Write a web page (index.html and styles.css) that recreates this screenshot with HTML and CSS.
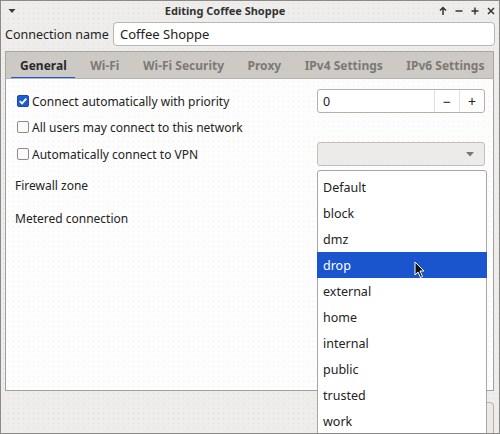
FILE: index.html
```html
<!DOCTYPE html>
<html>
<head>
<meta charset="utf-8">
<link rel="stylesheet" href="styles.css">
</head>
<body>
<div class="window">
  <div class="titlebar">
    <svg class="menu-arrow" width="8" height="6" viewBox="0 0 8 6"><path d="M0.5 1 L7.5 1 L4 5 Z" fill="#3a3a3a"/></svg>
    <div class="title">Editing Coffee Shoppe</div>
    <div class="wbtns">
      <svg width="10" height="10" viewBox="0 0 10 10"><path d="M5 9 V2 M2 4.5 L5 1.5 L8 4.5" stroke="#333" stroke-width="1.5" fill="none"/></svg>
      <svg width="10" height="10" viewBox="0 0 10 10"><path d="M1.5 5 H8.5" stroke="#333" stroke-width="1.5"/></svg>
      <svg width="10" height="10" viewBox="0 0 10 10"><path d="M1.5 5 H8.5 M5 1.5 V8.5" stroke="#333" stroke-width="1.5"/></svg>
      <svg width="10" height="10" viewBox="0 0 10 10"><path d="M2 2 L8 8 M8 2 L2 8" stroke="#333" stroke-width="1.5"/></svg>
    </div>
  </div>
  <div class="namerow">
    <span class="namelabel">Connection name</span>
    <div class="input">Coffee Shoppe</div>
  </div>
  <div class="tabwidget">
    <div class="tabbar">
      <div class="tab active">General</div>
      <div class="tab">Wi-Fi</div>
      <div class="tab">Wi-Fi Security</div>
      <div class="tab">Proxy</div>
      <div class="tab">IPv4 Settings</div>
      <div class="tab">IPv6 Settings</div>
    </div>
    <div class="panel">
      <div class="grid">
        <div class="check"><span class="box checked"><svg width="10" height="10" viewBox="0 0 10 10"><path d="M1.8 5.2 L4 7.4 L8.3 2.6" stroke="#fff" stroke-width="1.8" fill="none"/></svg></span>Connect automatically with priority</div>
        <div class="spin">
          <span class="spinval">0</span>
          <span class="spinbtn">−</span>
          <span class="spinbtn">+</span>
        </div>
        <div class="check"><span class="box"></span>All users may connect to this network</div>
        <div></div>
        <div class="check"><span class="box"></span>Automatically connect to VPN</div>
        <div class="combo disabled"><svg width="8" height="5" viewBox="0 0 8 5"><path d="M0 0 H8 L4 4.5 Z" fill="#7a7876"/></svg></div>
        <div class="label">Firewall zone</div>
        <div></div>
        <div class="label">Metered connection</div>
        <div></div>
      </div>
    </div>
  </div>
  <div class="buttons"><div class="btn"></div></div>

  <div class="popup">
    <div class="item">Default</div>
    <div class="item">block</div>
    <div class="item">dmz</div>
    <div class="item selected">drop</div>
    <div class="item">external</div>
    <div class="item">home</div>
    <div class="item">internal</div>
    <div class="item">public</div>
    <div class="item">trusted</div>
    <div class="item">work</div>
  </div>
  <svg class="cursor" width="12" height="18" viewBox="0 0 12 18"><path d="M1 1 L1 14 L4 11 L6.5 16.5 L8.5 15.5 L6 10 L10 10 Z" fill="#111" stroke="#fff" stroke-width="1" stroke-linejoin="round"/></svg>
</div>
</body>
</html>
```

FILE: styles.css
```css
* { box-sizing: border-box; }
html, body { margin: 0; padding: 0; }
body {
  font-family: "Noto Sans", "Open Sans", sans-serif;
  font-size: 12px;
  color: #232323;
  background: #efedeb;
}
.window {
  position: relative;
  width: 500px;
  height: 434px;
  border: 1px solid #8c8a88;
  background-color: #efedeb;
  background-image: radial-gradient(circle, rgba(0,0,0,0.07) 0.6px, transparent 0.9px);
  background-size: 5px 5px;
  display: flex;
  flex-direction: column;
  overflow: hidden;
}
.titlebar {
  height: 19px;
  display: flex;
  align-items: center;
  flex-shrink: 0;
}
.menu-arrow { margin-left: 7px; margin-right: 4px; }
.title {
  flex: 1;
  text-align: center;
  font-weight: bold;
  font-size: 11px;
  color: #333;
  padding-right: 8px;
}
.wbtns {
  display: flex;
  gap: 6px;
  padding-right: 3px;
}
.namerow {
  display: flex;
  align-items: center;
  padding: 2px 4px 0 4px;
  flex-shrink: 0;
}
.namelabel { font-size: 12.5px; }
.input {
  margin-left: auto;
  width: 382px;
  height: 24px;
  background: #fff;
  border: 1px solid #b9b5b2;
  border-radius: 4px;
  padding-left: 6px;
  display: flex;
  align-items: center;
  font-size: 13px;
}
.tabwidget {
  margin: 5px 5px 0 4px;
  flex-shrink: 0;
}
.tabbar {
  height: 28px;
  background: #cdc9c5;
  border: 1px solid #aaa6a2;
  border-bottom: 1px solid #b7b3af;
  display: flex;
  padding-left: 2px;
  overflow: hidden;
}
.tab {
  position: relative;
  padding: 0 11.5px 0 12px;
  display: flex;
  align-items: center;
  font-weight: bold;
  font-size: 12px;
  color: #7c7975;
  white-space: nowrap;
  flex-shrink: 0;
}
.tab.active { color: #2a2a2a; }
.tab.active::after {
  content: "";
  position: absolute;
  left: 3px;
  right: 3px;
  bottom: -1px;
  height: 2px;
  background: #1d5bd3;
}
.panel {
  height: 312px;
  background-color: #fdfdfd;
  background-image: radial-gradient(circle, rgba(0,0,0,0.06) 0.6px, transparent 0.9px);
  background-size: 5px 5px;
  border: 1px solid #a3a09c;
  border-top: none;
  padding: 10px 8px 0 9px;
}
.grid {
  display: grid;
  grid-template-columns: 1fr 168px;
  grid-template-rows: 24px 20px 26px 28px 30px;
  row-gap: 4px;
  align-items: center;
}
.check {
  display: flex;
  align-items: center;
  padding-left: 2px;
  white-space: nowrap;
}
.box {
  width: 12px;
  height: 12px;
  border: 1px solid #8e8b88;
  border-radius: 2px;
  background: #fbfbfb;
  margin-right: 3px;
  display: flex;
  align-items: center;
  justify-content: center;
}
.box.checked {
  background: #1d5bd3;
  border-color: #1848a8;
}
.spin {
  height: 24px;
  border: 1px solid #b4b0ac;
  border-radius: 3px;
  background: #fff;
  display: flex;
  align-items: stretch;
}
.spinval {
  flex: 1;
  padding-left: 5px;
  display: flex;
  align-items: center;
  font-size: 12.5px;
}
.spinbtn {
  width: 25px;
  display: flex;
  align-items: center;
  justify-content: center;
  border-left: 1px solid #e2dfdc;
  font-size: 14px;
}
.combo {
  height: 24px;
  border: 1px solid #c3bfbb;
  border-radius: 3px;
  background: #ecebe9;
  display: flex;
  align-items: center;
  justify-content: flex-end;
  padding-right: 10px;
}
.buttons {
  flex: 1;
  display: flex;
  justify-content: flex-end;
  padding: 11px 5px 0 0;
}
.btn {
  width: 80px;
  height: 40px;
  border: 1px solid #b4b0ac;
  border-radius: 4px;
  background: #eceae8;
}
.popup {
  position: absolute;
  left: 316px;
  top: 169px;
  width: 170px;
  height: 280px;
  background: #fff;
  border: 1px solid #a9a5a1;
  border-radius: 3px 3px 0 0;
  padding-top: 3px;
}
.item {
  height: 26px;
  display: flex;
  align-items: center;
  padding-left: 5px;
  font-size: 12.5px;
  color: #232323;
}
.item.selected {
  background: #1b55cd;
  color: #fff;
  margin: 0 -1px;
  padding-left: 6px;
}
.cursor {
  position: absolute;
  left: 413px;
  top: 260px;
}
```
